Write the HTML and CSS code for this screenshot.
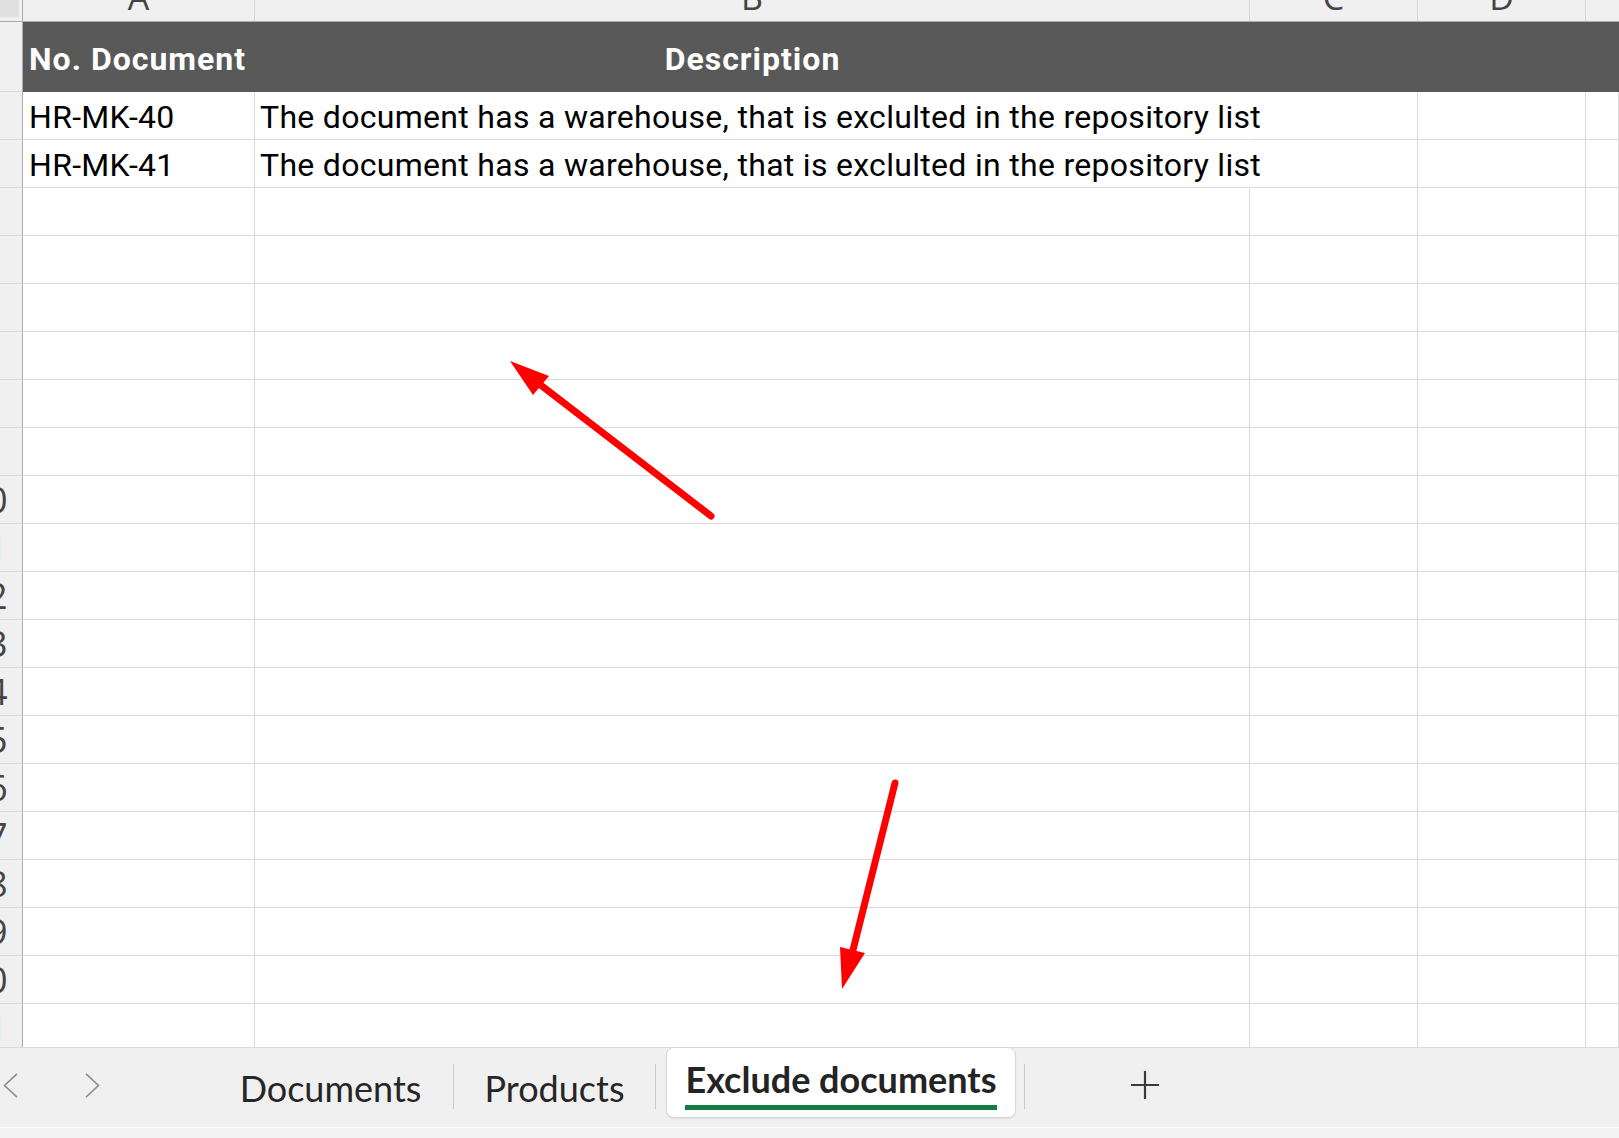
FILE: index.html
```html
<!DOCTYPE html>
<html>
<head>
<meta charset="utf-8">
<link rel="stylesheet" href="styles.css">
</head>
<body>
<div class="page">
  <div class="sheet">
    <div class="colhead">
      <div class="corner"><div class="corner-box"></div></div>
      <div class="ch cA"><span>A</span></div>
      <div class="ch cB"><span>B</span></div>
      <div class="ch cC"><span>C</span></div>
      <div class="ch cD"><span>D</span></div>
      <div class="ch cE"></div>
    </div>

    <div class="row hdr">
      <div class="rh"><span>1</span></div>
      <div class="cell cA">No. Document</div>
      <div class="cell cB center">Description</div>
      <div class="cell cC"></div>
      <div class="cell cD"></div>
      <div class="cell cE"></div>
    </div>

    <div class="row">
      <div class="rh"><span>2</span></div>
      <div class="cell cA">HR-MK-40</div>
      <div class="cell cB over">The document has a warehouse, that is exclulted in the repository list</div>
      <div class="cell cC"></div>
      <div class="cell cD"></div>
      <div class="cell cE"></div>
    </div>
    <div class="row">
      <div class="rh"><span>3</span></div>
      <div class="cell cA">HR-MK-41</div>
      <div class="cell cB over">The document has a warehouse, that is exclulted in the repository list</div>
      <div class="cell cC"></div>
      <div class="cell cD"></div>
      <div class="cell cE"></div>
    </div>

    <div class="row"><div class="rh"><span>4</span></div><div class="cell cA"></div><div class="cell cB"></div><div class="cell cC"></div><div class="cell cD"></div><div class="cell cE"></div></div>
    <div class="row"><div class="rh"><span>5</span></div><div class="cell cA"></div><div class="cell cB"></div><div class="cell cC"></div><div class="cell cD"></div><div class="cell cE"></div></div>
    <div class="row"><div class="rh"><span>6</span></div><div class="cell cA"></div><div class="cell cB"></div><div class="cell cC"></div><div class="cell cD"></div><div class="cell cE"></div></div>
    <div class="row"><div class="rh"><span>7</span></div><div class="cell cA"></div><div class="cell cB"></div><div class="cell cC"></div><div class="cell cD"></div><div class="cell cE"></div></div>
    <div class="row"><div class="rh"><span>8</span></div><div class="cell cA"></div><div class="cell cB"></div><div class="cell cC"></div><div class="cell cD"></div><div class="cell cE"></div></div>
    <div class="row"><div class="rh"><span>9</span></div><div class="cell cA"></div><div class="cell cB"></div><div class="cell cC"></div><div class="cell cD"></div><div class="cell cE"></div></div>
    <div class="row"><div class="rh"><span>10</span></div><div class="cell cA"></div><div class="cell cB"></div><div class="cell cC"></div><div class="cell cD"></div><div class="cell cE"></div></div>
    <div class="row"><div class="rh"><span>11</span></div><div class="cell cA"></div><div class="cell cB"></div><div class="cell cC"></div><div class="cell cD"></div><div class="cell cE"></div></div>
    <div class="row"><div class="rh"><span>12</span></div><div class="cell cA"></div><div class="cell cB"></div><div class="cell cC"></div><div class="cell cD"></div><div class="cell cE"></div></div>
    <div class="row"><div class="rh"><span>13</span></div><div class="cell cA"></div><div class="cell cB"></div><div class="cell cC"></div><div class="cell cD"></div><div class="cell cE"></div></div>
    <div class="row"><div class="rh"><span>14</span></div><div class="cell cA"></div><div class="cell cB"></div><div class="cell cC"></div><div class="cell cD"></div><div class="cell cE"></div></div>
    <div class="row"><div class="rh"><span>15</span></div><div class="cell cA"></div><div class="cell cB"></div><div class="cell cC"></div><div class="cell cD"></div><div class="cell cE"></div></div>
    <div class="row"><div class="rh"><span>16</span></div><div class="cell cA"></div><div class="cell cB"></div><div class="cell cC"></div><div class="cell cD"></div><div class="cell cE"></div></div>
    <div class="row"><div class="rh"><span>17</span></div><div class="cell cA"></div><div class="cell cB"></div><div class="cell cC"></div><div class="cell cD"></div><div class="cell cE"></div></div>
    <div class="row"><div class="rh"><span>18</span></div><div class="cell cA"></div><div class="cell cB"></div><div class="cell cC"></div><div class="cell cD"></div><div class="cell cE"></div></div>
    <div class="row"><div class="rh"><span>19</span></div><div class="cell cA"></div><div class="cell cB"></div><div class="cell cC"></div><div class="cell cD"></div><div class="cell cE"></div></div>
    <div class="row"><div class="rh"><span>20</span></div><div class="cell cA"></div><div class="cell cB"></div><div class="cell cC"></div><div class="cell cD"></div><div class="cell cE"></div></div>
    <div class="row"><div class="rh"><span>21</span></div><div class="cell cA"></div><div class="cell cB"></div><div class="cell cC"></div><div class="cell cD"></div><div class="cell cE"></div></div>
    <div class="row"><div class="rh"><span>22</span></div><div class="cell cA"></div><div class="cell cB"></div><div class="cell cC"></div><div class="cell cD"></div><div class="cell cE"></div></div>
  </div>

  <div class="tabbar">
    <div class="chev chev-left">
      <svg width="15" height="25" viewBox="0 0 15 25"><polyline points="14,0.8 1.5,12.5 14,24.2" fill="none" stroke="#8c8c8c" stroke-width="1.6"/></svg>
    </div>
    <div class="chev chev-right">
      <svg width="15" height="25" viewBox="0 0 15 25"><polyline points="1,0.8 13.5,12.5 1,24.2" fill="none" stroke="#8c8c8c" stroke-width="1.6"/></svg>
    </div>
    <div class="tab tab-docs"><span>Documents</span></div>
    <div class="sep"></div>
    <div class="tab tab-products"><span>Products</span></div>
    <div class="sep"></div>
    <div class="tab active"><span>Exclude documents</span></div>
    <div class="sep sep-after"></div>
    <div class="plus">
      <svg width="28" height="28" viewBox="0 0 28 28"><path d="M14 0V28M0 14H28" stroke="#3a3a3a" stroke-width="2.2" fill="none"/></svg>
    </div>
  </div>
  <div class="status"></div>

  <svg class="annot" width="1619" height="1138" viewBox="0 0 1619 1138">
    <line x1="711" y1="516" x2="538" y2="383" stroke="#ff0000" stroke-width="7" stroke-linecap="round"/>
    <polygon points="510,361 549,376 533,395" fill="#ff0000"/>
    <line x1="895" y1="783" x2="853" y2="950" stroke="#ff0000" stroke-width="7" stroke-linecap="round"/>
    <polygon points="842,989 840,947 865,953" fill="#ff0000"/>
  </svg>
</div>
</body>
</html>
```

FILE: styles.css
```css
* { box-sizing: border-box; }
html, body { margin: 0; padding: 0; }
body {
  width: 1619px;
  height: 1138px;
  overflow: hidden;
  background: #ffffff;
}
.page {
  position: relative;
  width: 1619px;
  height: 1138px;
  display: flex;
  flex-direction: column;
  font-family: "Roboto", "Liberation Sans", sans-serif;
}

/* ---------- sheet ---------- */
.sheet {
  height: 1047px;
  overflow: hidden;
  flex-shrink: 0;
  display: flex;
  flex-direction: column;
}
.colhead {
  display: flex;
  height: 22px;
  flex-shrink: 0;
  background: #f0f0f0;
  border-bottom: 1px solid #acacac;
}
.corner {
  width: 23px;
  flex-shrink: 0;
  border-right: 1px solid #acacac;
  position: relative;
}
.corner-box {
  width: 19px;
  height: 17px;
  background: #e0e0e0;
}
.ch {
  height: 21px;
  flex-shrink: 0;
  display: flex;
  justify-content: center;
  align-items: flex-end;
  overflow: hidden;
  border-right: 1px solid #d6d6d6;
  font-family: "Open Sans", "Noto Sans", sans-serif;
  font-size: 34px;
  color: #444444;
}
.ch span {
  line-height: 34px;
  margin-bottom: 7px;
  flex-shrink: 0;
}
.cA { width: 232px; flex-shrink: 0; }
.cB { width: 995px; flex-shrink: 0; }
.cC { width: 168px; flex-shrink: 0; }
.cD { width: 168px; flex-shrink: 0; }
.cE { flex: 1 1 auto; }
.ch.cE { border-right: none; }

.row {
  display: flex;
  height: 48px;
  flex-shrink: 0;
}
.rh {
  width: 23px;
  flex-shrink: 0;
  background: #f0f0f0;
  border-right: 1px solid #acacac;
  border-bottom: 1px solid #d9d9d9;
  overflow: hidden;
  display: flex;
  align-items: center;
  font-family: "Open Sans", "Noto Sans", sans-serif;
  font-size: 36px;
  color: #444444;
}
.rh span {
  flex-shrink: 0;
  width: 60px;
  margin-left: -43px;
  text-align: center;
  line-height: 36px;
}
.cell {
  border-right: 1px solid #dadada;
  border-bottom: 1px solid #dadada;
  display: flex;
  align-items: flex-end;
  padding: 0 0 6px 6px;
  font-size: 32px;
  line-height: 32px;
  letter-spacing: 0.3px;
  color: #000000;
  white-space: nowrap;
}
.cell.cB { padding-left: 5px; }
.cell.over {
  overflow: visible;
  border-right-color: transparent;
  position: relative;
  z-index: 1;
}
.row.hdr { height: 70px; }
.row.hdr .cell {
  background: #595959;
  color: #ffffff;
  font-weight: 700;
  letter-spacing: 1px;
  border-right: none;
  border-bottom: none;
  padding-bottom: 17px;
}
.row.hdr .rh { border-bottom: 1px solid #d9d9d9; }
.cell.center { justify-content: center; padding-left: 0; }

/* ---------- tab bar ---------- */
.tabbar {
  height: 80px;
  flex-shrink: 0;
  background: #f0f0f0;
  border-top: 1px solid #dadada;
  display: flex;
  align-items: flex-start;
  font-family: "Lato", "Noto Sans", sans-serif;
}
.chev { flex-shrink: 0; margin-top: 25px; height: 25px; }
.chev svg { display: block; }
.chev-left { margin-left: 3px; }
.chev-right { margin-left: 67px; }
.tab {
  flex-shrink: 0;
  text-align: center;
  font-size: 36px;
  line-height: 36px;
  color: #262626;
  padding-top: 22px;
  height: 79px;
}
.tab-docs { margin-left: 108px; width: 245px; }
.tab-products { width: 201px; }
.sep {
  flex-shrink: 0;
  width: 1px;
  height: 45px;
  margin-top: 16px;
  background: #c8c8c8;
}
.tab.active {
  margin-left: 10px;
  margin-top: -1px;
  width: 350px;
  height: 71px;
  padding-top: 13px;
  background: #ffffff;
  border: 1px solid #d8d8d8;
  border-radius: 8px;
  box-shadow: 0 1px 1px rgba(0, 0, 0, 0.08);
  font-weight: 700;
  color: #242424;
}
.tab.active span {
  display: inline-block;
  padding-bottom: 8px;
  border-bottom: 5px solid #137c43;
}
.sep-after { margin-left: 8px; }
.plus { flex-shrink: 0; margin-left: 106px; margin-top: 23px; }
.plus svg { display: block; }

.status {
  flex: 1 1 auto;
  background: #f3f3f3;
  border-top: 1px solid #fbfbfb;
}

/* ---------- annotation arrows ---------- */
.annot {
  position: absolute;
  left: 0;
  top: 0;
  pointer-events: none;
}
```
